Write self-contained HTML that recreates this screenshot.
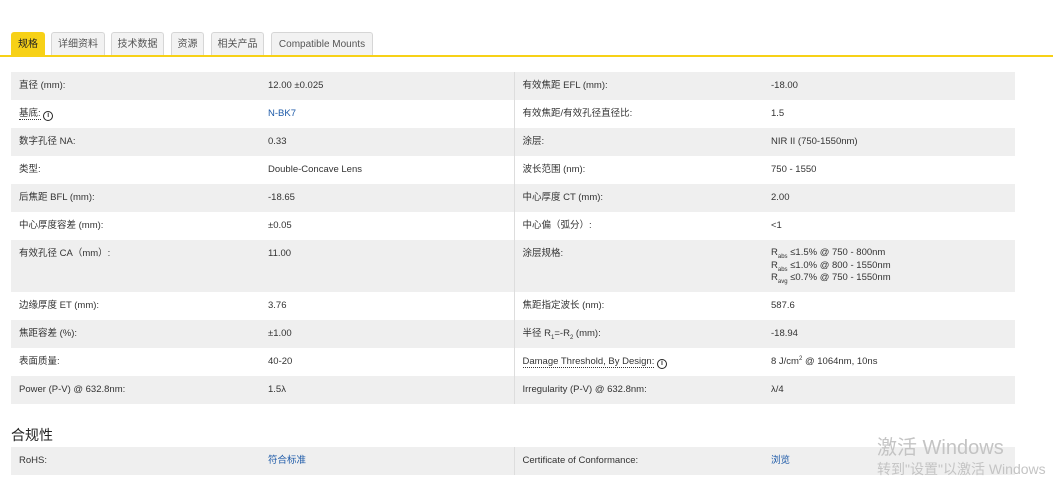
<!DOCTYPE html>
<html><head><meta charset="utf-8"><style>
*{margin:0;padding:0;box-sizing:border-box}
body{width:1053px;height:490px;background:#fff;font-family:"Liberation Sans","Noto Sans CJK SC",sans-serif;color:#333;position:relative;overflow:hidden;font-size:9.5px}
.tab{position:absolute;top:32px;height:24px;border:1px solid #d6d6d6;border-bottom:none;background:#f2f2f2;border-radius:3px 3px 0 0;font-size:10px;line-height:23px;text-align:center;color:#555}
.tab.on{background:#f7d117;border-color:#f7d117;color:#222}
.line{position:absolute;top:55px;left:0;width:1053px;height:2px;background:#f7d117}
table{position:absolute;left:11px;border-collapse:collapse;width:1004px}
td{padding:0 8px;height:28px;vertical-align:top;padding-top:8px;line-height:12px}
td.c1{width:249px}td.c2{width:254px;border-right:1px solid #ddd}td.c3{width:249px}
tr.g td{background:#efefef}
a{color:#1d5aa8;text-decoration:none}
.dot{border-bottom:1px dotted #333}
.i{display:inline-block;width:10px;height:10px;border:1.5px solid #222;border-radius:50%;font-size:7px;line-height:7px;text-align:center;font-weight:bold;vertical-align:-1px}
sub,sup{font-size:6px;line-height:0}
.h{position:absolute;left:11px;top:425px;font-size:14px;color:#222}
.w1{position:absolute;left:877px;top:431px;font-size:20px;color:#c4c4c4}
.w2{position:absolute;left:877px;top:459px;font-size:14px;color:#c4c4c4;white-space:nowrap}
</style></head><body>
<div class="tab on" style="left:11px;width:34px">规格</div>
<div class="tab" style="left:51px;width:54px">详细资料</div>
<div class="tab" style="left:111px;width:53px">技术数据</div>
<div class="tab" style="left:171px;width:33px">资源</div>
<div class="tab" style="left:211px;width:53px">相关产品</div>
<div class="tab" style="left:271px;width:102px">Compatible Mounts</div>
<div class="line"></div>
<table style="top:72px">
<tr class="g"><td class="c1">直径 (mm):</td><td class="c2">12.00 ±0.025</td><td class="c3">有效焦距 EFL (mm):</td><td>-18.00</td></tr>
<tr><td class="c1"><span class="dot">基底:</span> <span class="i">i</span></td><td class="c2"><a>N-BK7</a></td><td class="c3">有效焦距/有效孔径直径比:</td><td>1.5</td></tr>
<tr class="g"><td class="c1">数字孔径 NA:</td><td class="c2">0.33</td><td class="c3">涂层:</td><td>NIR II (750-1550nm)</td></tr>
<tr><td class="c1">类型:</td><td class="c2">Double-Concave Lens</td><td class="c3">波长范围 (nm):</td><td>750 - 1550</td></tr>
<tr class="g"><td class="c1">后焦距 BFL (mm):</td><td class="c2">-18.65</td><td class="c3">中心厚度 CT (mm):</td><td>2.00</td></tr>
<tr><td class="c1">中心厚度容差 (mm):</td><td class="c2">±0.05</td><td class="c3">中心偏（弧分）:</td><td>&lt;1</td></tr>
<tr class="g"><td class="c1" style="height:52px">有效孔径 CA（mm）:</td><td class="c2">11.00</td><td class="c3">涂层规格:</td><td style="line-height:12.5px;padding-top:7px">R<sub>abs</sub> ≤1.5% @ 750 - 800nm<br>R<sub>abs</sub> ≤1.0% @ 800 - 1550nm<br>R<sub>avg</sub> ≤0.7% @ 750 - 1550nm</td></tr>
<tr><td class="c1">边缘厚度 ET (mm):</td><td class="c2">3.76</td><td class="c3">焦距指定波长 (nm):</td><td>587.6</td></tr>
<tr class="g"><td class="c1">焦距容差 (%):</td><td class="c2">±1.00</td><td class="c3">半径 R<sub>1</sub>=-R<sub>2</sub> (mm):</td><td>-18.94</td></tr>
<tr><td class="c1">表面质量:</td><td class="c2">40-20</td><td class="c3"><span class="dot">Damage Threshold, By Design:</span> <span class="i">i</span></td><td>8 J/cm<sup>2</sup> @ 1064nm, 10ns</td></tr>
<tr class="g"><td class="c1">Power (P-V) @ 632.8nm:</td><td class="c2">1.5λ</td><td class="c3">Irregularity (P-V) @ 632.8nm:</td><td>λ/4</td></tr>
</table>
<div class="h">合规性</div>
<table style="top:447px">
<tr class="g"><td class="c1" style="height:27px">RoHS:</td><td class="c2"><a>符合标准</a></td><td class="c3">Certificate of Conformance:</td><td><a>浏览</a></td></tr>
</table>
<div class="w1">激活 Windows</div>
<div class="w2">转到"设置"以激活 Windows</div>
</body></html>
